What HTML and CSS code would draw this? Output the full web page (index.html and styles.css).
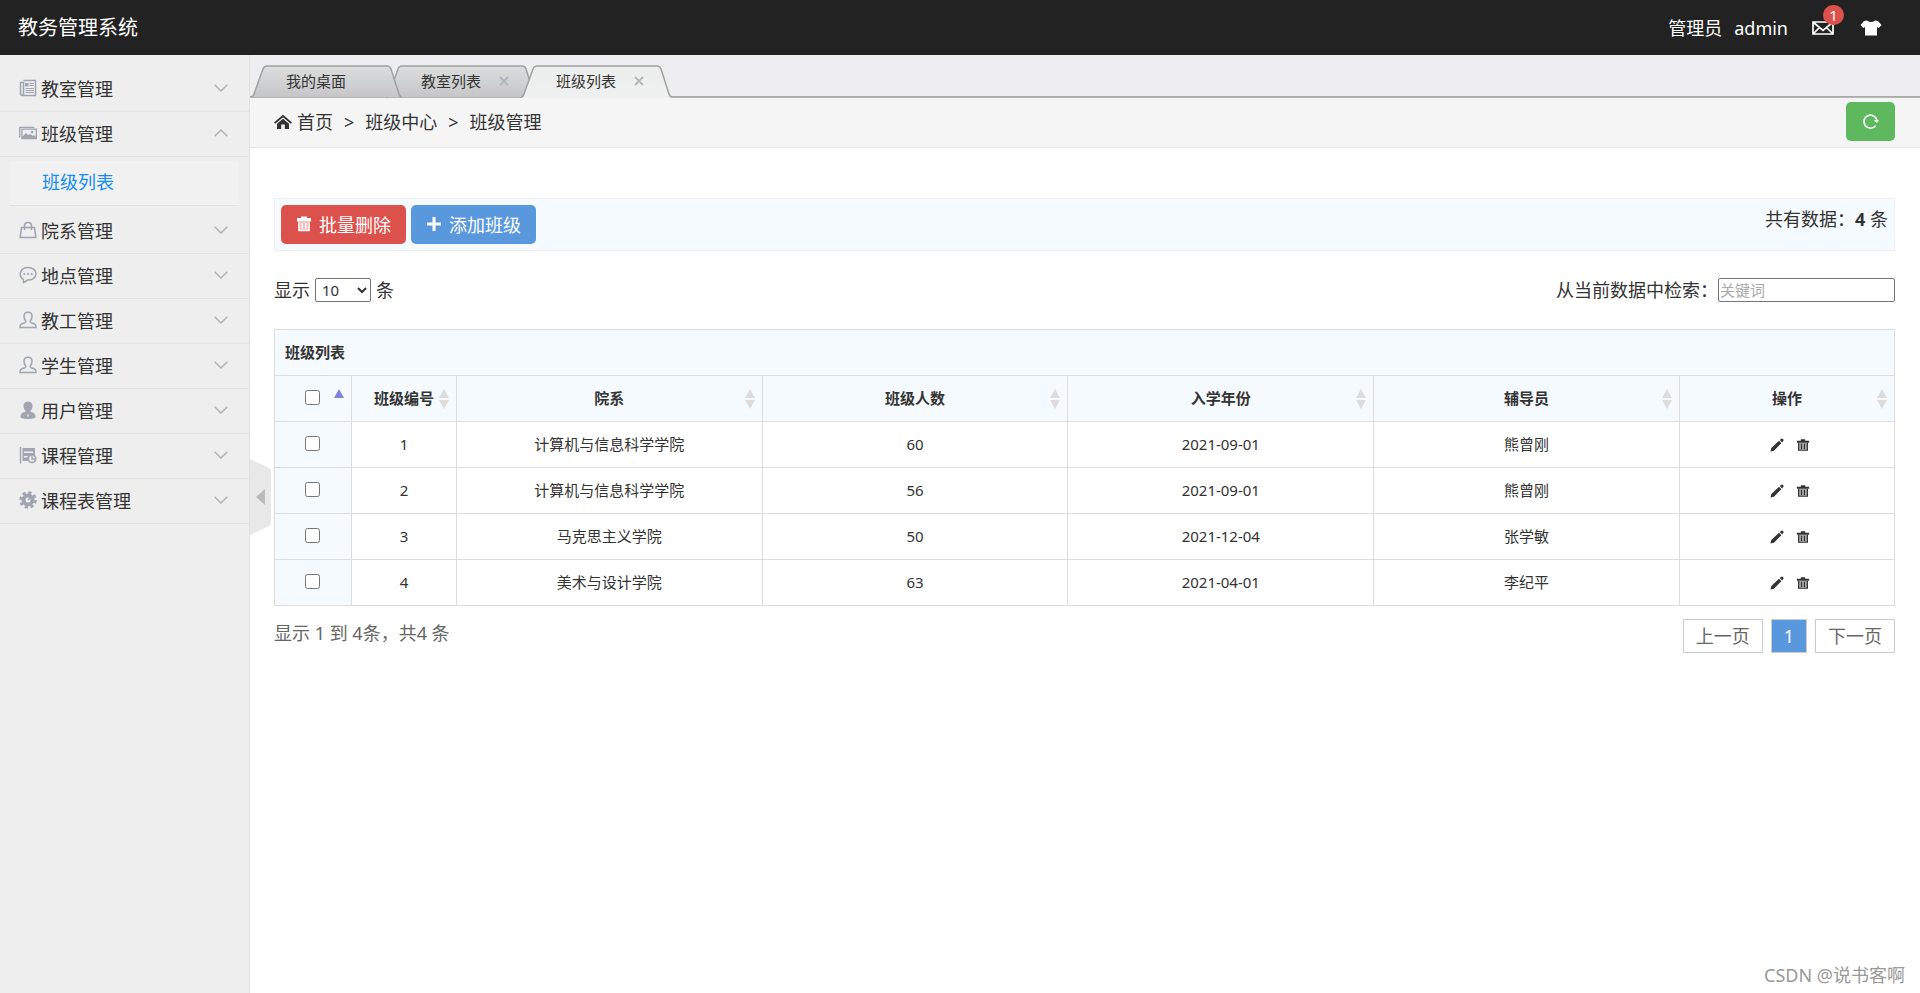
FILE: index.html
```html
<!DOCTYPE html>
<html lang="zh-CN">
<head>
<meta charset="utf-8">
<title>教务管理系统</title>
<link rel="stylesheet" href="styles.css">
</head>
<body>
<svg class="sprite" aria-hidden="true">
  <symbol id="i-down" viewBox="0 0 14 8"><path d="M.7.8 7 7 13.300.8" fill="none" stroke="currentColor" stroke-width="1.500"/></symbol>
  <symbol id="i-up" viewBox="0 0 14 8"><path d="M.7 7.200 7 1l6.300 6.200" fill="none" stroke="currentColor" stroke-width="1.500"/></symbol>
  <symbol id="i-news" viewBox="0 0 18 18"><g fill="none" stroke="currentColor"><path d="M4.500 1.500h12v15h-13q-2 0-2-2v-11h3v11q0 2-1.500 2" stroke-width="1.500"/><path d="M10.500 4.500h4.500M10.500 6.500h4.500M6.500 9.500H15M6.500 11.500H15M6.500 13.500H15"/></g><path d="M6 4h3.500v3.500H6z" fill="currentColor"/></symbol>
  <symbol id="i-pic" viewBox="0 0 20 18"><path d="M.8 14V2.800h16.200" fill="none" stroke="currentColor" stroke-width="1.500"/><path fill="currentColor" fill-rule="evenodd" d="M2.500 4h17.500v12H2.500zM4 5.500v7.500l3.500-4 2.800 2.200 2.200-1 3 2 1-1 2 2V5.500z"/><circle cx="14.500" cy="8" r="1.400" fill="currentColor"/></symbol>
  <symbol id="i-bag" viewBox="0 0 18 18"><path d="M2.500 6.500h13l1.300 10H1.200zM5.500 9V5q0-3.500 3.500-3.500T12.500 5v4" fill="none" stroke="currentColor" stroke-width="1.600"/></symbol>
  <symbol id="i-chat" viewBox="0 0 18 18"><path d="M4.500 16.500v-3C-1.500 9.500 1.500 1.500 9 1.500c5 0 8 3 8 6.300 0 4-4 6.500-8.700 6.200-1.100 1.200-2.300 2-3.800 2.500z" fill="none" stroke="currentColor" stroke-width="1.500"/><g fill="currentColor"><circle cx="5.300" cy="8" r="1.100"/><circle cx="9" cy="8" r="1.100"/><circle cx="12.700" cy="8" r="1.100"/></g></symbol>
  <symbol id="i-user" viewBox="0 0 18 18"><path d="M1 16.500c0-3.500 1-3.500 5-4.700.8-.3 1-1.300.5-2C5.500 8.500 5 7 5 5.200 5 2.800 6.500 1.200 9 1.200s4 1.600 4 4c0 1.800-.5 3.300-1.500 4.600-.5.700-.3 1.700.5 2 4 1.200 5 1.200 5 4.700z" fill="none" stroke="currentColor" stroke-width="1.500"/></symbol>
  <symbol id="i-userfill" viewBox="0 0 18 18"><path fill="currentColor" d="M9 .5c2.600 0 4.500 1.700 4.500 4.500 0 2-.7 3.600-1.900 4.800v1c3.700 1 4.900 2.200 4.900 6q-3.500 1.200-7.500 1.200t-7.500-1.200c0-3.800 1.200-5 4.900-6v-1C5.200 8.600 4.500 7 4.500 5 4.500 2.200 6.400.5 9 .5z"/><path d="m9 13 .7 1-.4 2h-.6l-.4-2z" fill="#eee"/></symbol>
  <symbol id="i-course" viewBox="0 0 18 18"><path d="M1.500 1v16.500" fill="none" stroke="currentColor" stroke-width="1.500"/><path fill="currentColor" fill-rule="evenodd" d="M3.500 2H16v7.500h-3.500L9.500 11v4h-6zM5 5.500V7h9V5.500zM5 10v1.500h3.500V10z"/><circle cx="13" cy="12.700" r="3.700" fill="#eee" stroke="currentColor" stroke-width="1.700"/><path d="M13 9.500v3.500h3.500" fill="none" stroke="currentColor" stroke-width="1.300"/></symbol>
  <symbol id="i-gear" viewBox="0 0 18 18"><circle cx="9" cy="9" r="7" fill="none" stroke="currentColor" stroke-width="3.600" stroke-dasharray="3 2.498"/><circle cx="9" cy="9" r="4.500" fill="none" stroke="currentColor" stroke-width="4"/><path d="m9 9 3-3" stroke="currentColor" stroke-width="1.500"/></symbol>
  <symbol id="i-home" viewBox="0 0 18 18"><path fill="currentColor" d="M9 1.800 18 9.400l-1.200 1.400L9 4.300l-7.800 6.500L0 9.400z"/><path fill="currentColor" d="m9 5.700 6 5V16h-4.200v-4.500H7.200V16H3v-5.300z"/></symbol>
  <symbol id="i-trash" viewBox="0 0 16 16"><path fill="currentColor" d="M5 .5h6V2h4v3.500H1V2h4z"/><path fill="currentColor" fill-opacity=".65" d="M3 5.500h10V14H3z"/><path d="M2.800 5.500v9h10.400v-9M6.300 7v6M9.700 7v6" fill="none" stroke="currentColor" stroke-width="1.300"/></symbol>
  <symbol id="i-bin" viewBox="0 0 16 16"><path fill="currentColor" d="M5.500 1.500h5V3H15v2.500H1V3h4.500z"/><path fill="currentColor" fill-opacity=".4" d="M3 5.500h10V14H3z"/><path d="M3 5.500V14h10V5.500M6.300 6.500v6M9.700 6.500v6" fill="none" stroke="currentColor" stroke-width="1.400"/></symbol>
  <symbol id="i-pen" viewBox="0 0 16 16"><path fill="currentColor" d="m.5 15.500 1-4 8.800-8.300 2.700 2.700-8.500 8.700zM11.200 2.300 12.500 1q1.300-1 2.300.2 1.200 1.200.3 2.300L13.900 5z"/></symbol>
  <symbol id="i-plus" viewBox="0 0 16 16"><path d="M8 1v14M1 8h14" stroke="currentColor" stroke-width="3"/></symbol>
  <symbol id="i-refresh" viewBox="0 0 18 18"><path d="M14.500 13.500A7 7 0 1 1 15.800 7.500" fill="none" stroke="currentColor" stroke-width="1.800"/><path d="M12.500 7.500h5.500L15.600 10.500z" fill="currentColor"/></symbol>
  <symbol id="i-mail" viewBox="0 0 22 14"><path d="M1 1h20v12H1zM1.500 1.500 11 9.500l9.500-8M1.500 12.500l6-6M20.500 12.500l-6-6" fill="none" stroke="currentColor" stroke-width="1.700"/></symbol>
  <symbol id="i-shirt" viewBox="0 0 22 16"><path fill="currentColor" d="M7 .5q4 3 8 0l3 .6 3.500 4-2.700 3L17 7v8.500H5V7L3.200 8.100.5 5.100 4 1.100z"/></symbol>
  <symbol id="i-close" viewBox="0 0 10 10"><path d="m1 1 8 8M9 1 1 9" stroke="currentColor" stroke-width="1.800"/></symbol>
  <symbol id="i-sort" viewBox="0 0 10 20"><path d="M5 0 10 9H0zM0 11h10L5 20z" fill="#dcdcdc"/></symbol>
  <symbol id="i-asc" viewBox="0 0 10 20"><path d="M5 0 10 9H0z" fill="#7e82dd"/></symbol>
  <linearGradient id="g-tab" x2="0" y2="1"><stop offset="0" stop-color="#dcdede"/><stop offset="1" stop-color="#c6c6c8"/></linearGradient>
  <linearGradient id="g-active" x2="0" y2="1"><stop offset="0" stop-color="#eaeeec"/><stop offset="1" stop-color="#f0f0f1"/></linearGradient>
  <symbol id="s-tab" viewBox="0 0 151 33"><path d="M0 32q2 0 3-3L12 4q1-3 4-3h120q3 0 4 3l8 25q1 3 3 3" fill="url(#g-tab)" stroke="#a0a0a0" stroke-width="1.500"/></symbol>
  <symbol id="s-active" viewBox="0 0 151 33"><path d="M0 33q2 0 3-3L12 4q1-3 4-3h120q3 0 4 3l8 25q1 3 3 3v1z" fill="url(#g-active)"/><path d="M0 32q2 0 3-3L12 4q1-3 4-3h120q3 0 4 3l8 25q1 3 3 3" fill="none" stroke="#a0a0a0" stroke-width="1.500"/></symbol>
</svg>

<header class="topbar">
  <a class="brand" href="#">教务管理系统</a>
  <nav class="user-nav">
    <span>管理员</span>
    <a class="account" href="#">admin</a>
    <a class="mail" href="#" aria-label="消息"><svg><use href="#i-mail"/></svg><span class="badge">1</span></a>
    <a class="skin" href="#" aria-label="换肤"><svg><use href="#i-shirt"/></svg></a>
  </nav>
</header>

<div class="layout">
  <aside class="sidebar">
    <button class="menu"><svg class="ico"><use href="#i-news"/></svg>教室管理<svg class="arrow"><use href="#i-down"/></svg></button>
    <button class="menu"><svg class="ico"><use href="#i-pic"/></svg>班级管理<svg class="arrow"><use href="#i-up"/></svg></button>
    <div class="submenu"><a href="#">班级列表</a></div>
    <button class="menu"><svg class="ico"><use href="#i-bag"/></svg>院系管理<svg class="arrow"><use href="#i-down"/></svg></button>
    <button class="menu"><svg class="ico"><use href="#i-chat"/></svg>地点管理<svg class="arrow"><use href="#i-down"/></svg></button>
    <button class="menu"><svg class="ico"><use href="#i-user"/></svg>教工管理<svg class="arrow"><use href="#i-down"/></svg></button>
    <button class="menu"><svg class="ico"><use href="#i-user"/></svg>学生管理<svg class="arrow"><use href="#i-down"/></svg></button>
    <button class="menu"><svg class="ico"><use href="#i-userfill"/></svg>用户管理<svg class="arrow"><use href="#i-down"/></svg></button>
    <button class="menu"><svg class="ico"><use href="#i-course"/></svg>课程管理<svg class="arrow"><use href="#i-down"/></svg></button>
    <button class="menu"><svg class="ico"><use href="#i-gear"/></svg>课程表管理<svg class="arrow"><use href="#i-down"/></svg></button>
  </aside>

  <main class="main">
    <nav class="tabs">
      <a class="tab first" href="#"><svg class="shape"><use href="#s-tab"/></svg><span>我的桌面</span></a>
      <a class="tab" href="#"><svg class="shape"><use href="#s-tab"/></svg><span>教室列表</span><svg class="close"><use href="#i-close"/></svg></a>
      <a class="tab active" href="#"><svg class="shape"><use href="#s-active"/></svg><span>班级列表</span><svg class="close"><use href="#i-close"/></svg></a>
    </nav>
    <nav class="crumbs">
      <svg class="home"><use href="#i-home"/></svg><a href="#">首页</a><span class="sep">&gt;</span><span>班级中心</span><span class="sep">&gt;</span><span>班级管理</span>
      <button class="btn refresh" aria-label="刷新"><svg><use href="#i-refresh"/></svg></button>
    </nav>

    <section class="content">
      <div class="toolbar">
        <button class="btn danger"><svg><use href="#i-trash"/></svg>批量删除</button>
        <button class="btn primary"><svg><use href="#i-plus"/></svg>添加班级</button>
        <p class="total">共有数据：<strong>4</strong> 条</p>
      </div>

      <div class="filters">
        <label class="show">显示 <select class="length"><option>10</option></select> 条</label>
        <label class="search">从当前数据中检索：<input type="search" placeholder="关键词"></label>
      </div>

      <table class="grid">
        <colgroup><col class="c-check"><col class="c-id"><col><col><col><col><col class="c-act"></colgroup>
        <thead>
          <tr><th class="caption" colspan="7">班级列表</th></tr>
          <tr>
            <th><input type="checkbox" aria-label="全选"><svg class="sort"><use href="#i-asc"/></svg></th>
            <th>班级编号<svg class="sort"><use href="#i-sort"/></svg></th>
            <th>院系<svg class="sort"><use href="#i-sort"/></svg></th>
            <th>班级人数<svg class="sort"><use href="#i-sort"/></svg></th>
            <th>入学年份<svg class="sort"><use href="#i-sort"/></svg></th>
            <th>辅导员<svg class="sort"><use href="#i-sort"/></svg></th>
            <th>操作<svg class="sort"><use href="#i-sort"/></svg></th>
          </tr>
        </thead>
        <tbody>
          <tr><td><input type="checkbox" aria-label="选择 1"></td><td>1</td><td>计算机与信息科学学院</td><td>60</td><td>2021-09-01</td><td>熊曾刚</td><td><a href="#" aria-label="编辑"><svg><use href="#i-pen"/></svg></a><a href="#" aria-label="删除"><svg><use href="#i-bin"/></svg></a></td></tr>
          <tr><td><input type="checkbox" aria-label="选择 2"></td><td>2</td><td>计算机与信息科学学院</td><td>56</td><td>2021-09-01</td><td>熊曾刚</td><td><a href="#" aria-label="编辑"><svg><use href="#i-pen"/></svg></a><a href="#" aria-label="删除"><svg><use href="#i-bin"/></svg></a></td></tr>
          <tr><td><input type="checkbox" aria-label="选择 3"></td><td>3</td><td>马克思主义学院</td><td>50</td><td>2021-12-04</td><td>张学敏</td><td><a href="#" aria-label="编辑"><svg><use href="#i-pen"/></svg></a><a href="#" aria-label="删除"><svg><use href="#i-bin"/></svg></a></td></tr>
          <tr><td><input type="checkbox" aria-label="选择 4"></td><td>4</td><td>美术与设计学院</td><td>63</td><td>2021-04-01</td><td>李纪平</td><td><a href="#" aria-label="编辑"><svg><use href="#i-pen"/></svg></a><a href="#" aria-label="删除"><svg><use href="#i-bin"/></svg></a></td></tr>
        </tbody>
      </table>

      <div class="pager">
        <p>显示 1 到 4条，共4 条</p>
        <nav class="pages"><a href="#">上一页</a><a class="current" href="#">1</a><a href="#">下一页</a></nav>
      </div>
    </section>
  </main>
</div>

<button class="collapse" aria-label="收起菜单"><svg viewBox="0 0 21 76"><path d="M0 0 19 9q2 1 2 3v52q0 2-2 3L0 76z" fill="#e8e8e8"/><path d="m6 38 9-8v16z" fill="#bbb"/></svg></button>
<div class="watermark">CSDN @说书客啊</div>
</body>
</html>
```
FILE: styles.css
```css
* { box-sizing: border-box; }

body {
  position: relative;
  display: flex;
  flex-direction: column;
  min-height: 100vh;
  margin: 0;
  background: #fff;
  color: #333;
  font: 18px/24px "Noto Sans", "Noto Sans CJK SC", sans-serif;
}

a { color: inherit; text-decoration: none; }
p { margin: 0; }
button, input, select { font-family: inherit; color: inherit; }
button { border: 0; cursor: pointer; }
.sprite { position: absolute; width: 0; height: 0; }

.topbar {
  display: flex;
  justify-content: space-between;
  align-items: center;
  height: 55px;
  padding: 0 38px 0 18px;
  background: #222;
  color: #fff;
}
.brand { font-size: 20px; }
.user-nav { display: flex; align-items: center; }
.account { margin-left: 12px; }
.mail { position: relative; display: flex; margin-left: 24px; }
.mail svg { width: 22px; height: 14px; }
.badge {
  position: absolute;
  left: 11px;
  top: -16px;
  width: 21px;
  border-radius: 10px;
  background: #dd514c;
  font-size: 15px;
  line-height: 20px;
  text-align: center;
}
.skin { display: flex; margin-left: 26px; }
.skin svg { width: 22px; height: 16px; }

.layout { display: flex; flex: 1; }
.sidebar {
  flex: none;
  width: 250px;
  padding-top: 12px;
  border-right: 1px solid #e2e2e2;
  background: #eee;
}
.menu {
  display: flex;
  align-items: center;
  width: 100%;
  height: 45px;
  padding: 0 21px 2px 19px;
  border-bottom: 1px solid #e2e2e2;
  background: none;
  font-size: 18px;
}
.ico { width: 18px; height: 18px; margin-right: 4px; color: #a0a5b1; }
.arrow { width: 14px; height: 8px; margin-left: auto; color: #b2b2b2; }
.submenu { padding: 4px 10px 3px; }
.submenu a {
  display: block;
  height: 45px;
  padding-left: 32px;
  border-bottom: 1px solid #e2e2e2;
  background: #f1f1f1;
  color: #148cf1;
  line-height: 42px;
}

.main { flex: 1; min-width: 0; }
.tabs {
  display: flex;
  align-items: flex-end;
  height: 43px;
  padding-left: 1px;
  background: #eeeef0 linear-gradient(#a5a5a5, #bbb) 0 100% / 100% 2px no-repeat;
}
.tab {
  position: relative;
  display: flex;
  align-items: center;
  width: 151px;
  height: 33px;
  margin-right: -16px;
  padding: 0 0 2px 35px;
  font-size: 15px;
}
.tab.first { z-index: 1; }
.tab.active { z-index: 2; }
.tab span { position: relative; }
.shape { position: absolute; inset: 0; width: 151px; height: 33px; }
.close { position: relative; width: 10px; height: 10px; margin-left: 18px; color: #b2b6bd; }

.crumbs {
  display: flex;
  align-items: center;
  height: 50px;
  padding: 0 25px 2px 24px;
  border-bottom: 1px solid #e5e5e5;
  background: #f5f5f5;
}
.home { width: 18px; height: 18px; margin-right: 5px; }
.sep { margin: 0 11px; }

.btn {
  display: flex;
  align-items: center;
  justify-content: center;
  gap: 7px;
  height: 39px;
  padding: 0 15px 2px;
  border-radius: 5px;
  color: #fff;
  font-size: 18px;
}
.btn svg { width: 16px; height: 16px; }
.danger { background: #dd514c; }
.primary { background: #5a98de; }
.refresh { align-self: flex-start; margin: 4px 0 0 auto; padding: 0 16px; background: #5eb95e; }
.refresh svg { width: 17px; height: 17px; }

.content { padding: 50px 25px 25px 24px; }
.toolbar {
  display: flex;
  gap: 5px;
  padding: 6px;
  border: 1px solid #eee;
  background: #f5fafe;
}
.total { margin-left: auto; line-height: 28px; }

.filters {
  display: flex;
  justify-content: space-between;
  align-items: center;
  height: 78px;
}
.show { display: flex; align-items: center; gap: 5px; }
.length {
  width: 56px;
  height: 24px;
  margin: 0;
  padding: 0 0 0 2px;
  border: 1px solid #767676;
  border-radius: 2px;
  background: #fff;
  font-size: 15px;
}
.search { display: flex; align-items: center; }
.search input {
  width: 177px;
  height: 24px;
  padding: 1px;
  border: 1px solid #767676;
  border-radius: 2px;
  font-size: 15px;
}
.search input::placeholder { color: #aaa; }

.grid {
  width: 100%;
  border-collapse: collapse;
  table-layout: fixed;
  font-size: 15px;
  line-height: 24px;
}
.c-check { width: 77px; }
.c-id { width: 105px; }
.c-act { width: 215px; }
.grid th, .grid td {
  position: relative;
  height: 46px;
  padding: 0 10px 1px;
  border: 1px solid #ddd;
  text-align: center;
}
.grid th, .grid td:first-child { background: #f5fafe; background-clip: padding-box; }
.grid .caption { text-align: left; }
.grid input {
  width: 15px;
  height: 15px;
  margin: 0 1px 4px 0;
  vertical-align: middle;
}
.grid a svg { width: 14px; height: 14px; margin: 0 3px 2px 9px; vertical-align: middle; }
.sort { position: absolute; top: 13px; right: 7px; width: 10px; height: 20px; }

.pager {
  display: flex;
  justify-content: space-between;
  padding-top: 13px;
  color: #666;
}
.pager p { line-height: 28px; }
.pages { display: flex; gap: 8px; }
.pages a {
  padding: 0 12px;
  border: 1px solid #ccc;
  line-height: 32px;
}
.pages .current { background: #5a98de; color: #fff; }

.collapse {
  position: absolute;
  left: 250px;
  top: 50%;
  display: block;
  width: 21px;
  height: 76px;
  margin-top: -38px;
  padding: 0;
  background: none;
}
.collapse svg { display: block; width: 21px; height: 76px; }

.watermark {
  position: absolute;
  right: 15px;
  bottom: 6px;
  color: #999;
  font-size: 18px;
  text-shadow: 1px 1px 1px #fff;
}
```
